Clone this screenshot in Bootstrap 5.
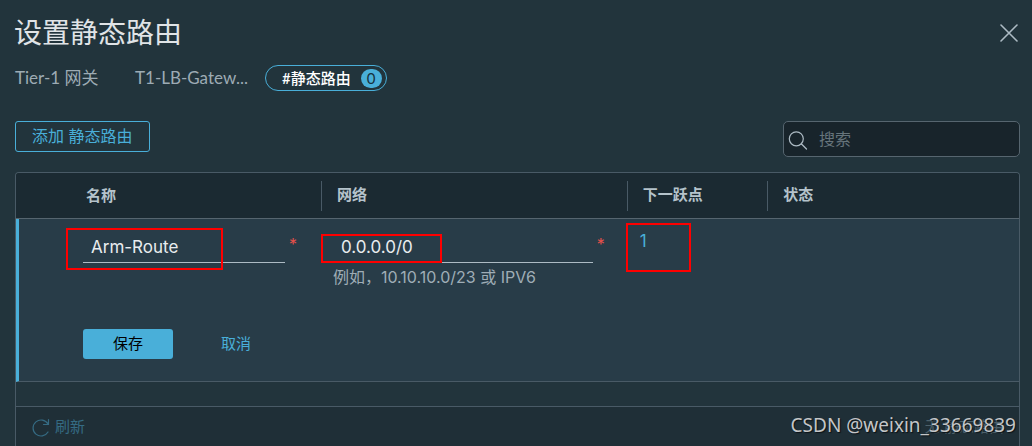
<!DOCTYPE html>
<html lang="zh-CN">
<head>
<meta charset="utf-8">
<meta name="viewport" content="width=device-width, initial-scale=1">
<title>设置静态路由</title>
<link href="https://cdn.jsdelivr.net/npm/bootstrap@5.3.0/dist/css/bootstrap.min.css" rel="stylesheet">
<style>
  :root { --accent: #49afd9; --line: #495a66; --muted-text: #adbbc4; }
  body { background: #22343c; color: var(--muted-text); font-family: Inter, "Noto Sans CJK SC", sans-serif; font-size: 15px; line-height: 20px; }
  .dialog-page { padding: 16px 12px 0 15px; }
  .dialog-title { font-size: 28px; line-height: 34px; font-weight: 400; color: #e0e4e7; margin-left: -1px; }
  .close-btn { width: 24px; height: 24px; color: var(--muted-text); line-height: 0; }
  .crumbs { height: 26px; margin-top: 15px; color: #9dabb4; font-family: Lato, "Noto Sans CJK SC", sans-serif; font-size: 17px; }
  .crumb-type { width: 120px; }
  .crumb-name { width: 118px; margin-right: 12px; }
  .filter-pill { height: 26px; padding: 0 4px 0 16px; border: 1px solid var(--accent); border-radius: 13px; color: #fff; font-size: 15px; font-weight: 500; }
  .count-dot { width: 21px; height: 19px; margin-left: 10px; border-radius: 10px; background: var(--accent); color: #16313d; font-size: 15px; font-weight: 400; }
  .tools { margin-top: 30px; height: 36px; }
  .add-btn { height: 31px; padding: 0 16px 2px; border-color: var(--accent); border-radius: 3px; color: var(--accent); font-size: 16px; line-height: 20px; }
  .search-box { width: 237px; height: 36px; }
  .search-box input { height: 36px; padding: 0 8px 0 35px; background: #18242b; border: 1px solid #56656f; border-radius: 5px; color: #fff; font-size: 16px; }
  .search-box input::placeholder { color: #66747b; opacity: 1; }
  .search-box svg { left: 5px; top: 9px; }
  .grid-frame { margin-top: 15px; border: 1px solid var(--line); border-bottom: 0; border-radius: 4px 4px 0 0; }
  .route-table { table-layout: fixed; border-collapse: separate; border-spacing: 0; }
  .route-table th { height: 46px; padding: 0; background: #1b2a32; border-bottom: 1px solid #56656f; font-weight: 700; color: #b5c3cb; vertical-align: middle; }
  .route-table th:first-child { border-top-left-radius: 3px; padding-left: 70px; }
  .route-table th:last-child { border-top-right-radius: 3px; }
  .head-split { height: 30px; padding: 4px 0 0 15px; border-left: 1px solid var(--line); }
  .route-table td { padding: 0; background: #283c48; vertical-align: top; }
  .route-table td:first-child { border-left: 3px solid var(--accent); }
  .col-name { width: 30.4%; } .col-net { width: 30.5%; } .col-hop { width: 14%; }
  .edit-row td { height: 98px; }
  .action-row td { height: 65px; padding: 12px 0 0 64px; border-bottom: 1px solid var(--line); }
  .name-cell { padding: 15px 24px 0 64px; }
  .net-cell { padding: 15px 22px 0 12px; }
  .line-input { height: 29px; padding: 0 8px 3px; background: transparent; border: 0; border-bottom: 1px solid #adbbc4; border-radius: 0; color: #e9ecef; font-size: 17px; line-height: 25px; flex: 1; min-width: 0; }
  .line-input:focus { background: transparent; color: #fff; box-shadow: none; }
  .required-star { width: 8px; margin-left: 4px; color: #e6504a; font-size: 16px; line-height: 20px; }
  .hint { margin-top: 4px; color: #9fadb6; font-size: 16px; line-height: 20px; }
  .hop-link { display: inline-block; margin: 12px 0 0 13px; color: var(--accent); font-size: 17px; line-height: 20px; text-decoration: none; }
  .callout-box { border: 2px solid #f00; pointer-events: none; }
  .callout-name { left: 47px; top: 9px; width: 157px; height: 42px; }
  .callout-net { left: 0; top: 15px; width: 121px; height: 29px; }
  .callout-hop { left: -1px; top: 4px; width: 65px; height: 49px; }
  .save-btn, .save-btn:hover { width: 90px; height: 30px; padding: 0; background: var(--accent); border: 0; border-radius: 3px; color: #000; font-size: 15px; }
  .cancel-btn { height: 30px; margin-left: 48px; padding: 0; border: 0; color: var(--accent); font-size: 15px; text-decoration: none; }
  .grid-foot { height: 40px; margin-top: 24px; padding: 0 15px; background: #1f2f37; border-top: 1px solid var(--line); }
  .refresh-btn { padding: 0; border: 0; color: #356b83; font-size: 15px; line-height: 20px; }
  .foot-count { color: #4d616b; }
  .watermark { right: 16px; bottom: 8px; font-family: "Noto Sans", sans-serif; font-size: 19px; line-height: 26px; color: #c4c6c8; text-shadow: 1px 1px 1px #0b1216; }
</style>
</head>
<body>
<main class="dialog-page position-relative">
  <header class="d-flex justify-content-between">
    <h1 class="dialog-title my-0">设置静态路由</h1>
    <button type="button" class="close-btn btn p-0 border-0 mt-1" aria-label="关闭">
      <svg width="24" height="24" viewBox="0 0 24 24" stroke="currentColor" stroke-width="1.6" stroke-linecap="round"><path d="M5 5l16 16M21 5L5 21"/></svg>
    </button>
  </header>
  <div class="crumbs d-flex align-items-center">
    <span class="crumb-type">Tier-1 网关</span>
    <span class="crumb-name text-nowrap">T1-LB-Gatew...</span>
    <span class="filter-pill d-inline-flex align-items-center">#静态路由<span class="count-dot d-inline-flex align-items-center justify-content-center">0</span></span>
  </div>
  <div class="tools d-flex align-items-start justify-content-between">
    <button type="button" class="add-btn btn mt-0">添加 静态路由</button>
    <div class="search-box position-relative">
      <input type="search" class="form-control" placeholder="搜索" aria-label="搜索">
      <svg class="position-absolute" width="20" height="20" viewBox="0 0 20 20" fill="none" stroke="#adbbc4" stroke-width="1.2" stroke-linecap="round"><circle cx="8.3" cy="8.8" r="7"/><path d="M13.5 14l5 5"/></svg>
    </div>
  </div>
  <section class="grid-frame">
    <table class="route-table w-100">
      <colgroup><col class="col-name"><col class="col-net"><col class="col-hop"><col></colgroup>
      <thead>
        <tr>
          <th scope="col">名称</th>
          <th scope="col"><div class="head-split">网络</div></th>
          <th scope="col"><div class="head-split">下一跃点</div></th>
          <th scope="col"><div class="head-split">状态</div></th>
        </tr>
      </thead>
      <tbody>
        <tr class="edit-row">
          <td class="position-relative">
            <div class="name-cell d-flex">
              <input type="text" class="line-input form-control" value="Arm-Route" aria-label="名称" required>
              <span class="required-star">*</span>
            </div>
            <span class="callout-box callout-name position-absolute"></span>
          </td>
          <td class="position-relative">
            <div class="net-cell">
              <div class="d-flex">
                <input type="text" class="line-input form-control" value="0.0.0.0/0" aria-label="网络" aria-describedby="net-hint" required>
                <span class="required-star">*</span>
              </div>
              <div class="hint" id="net-hint">例如，10.10.10.0/23 或 IPV6</div>
            </div>
            <span class="callout-box callout-net position-absolute"></span>
          </td>
          <td class="position-relative">
            <a href="#" class="hop-link">1</a>
            <span class="callout-box callout-hop position-absolute"></span>
          </td>
          <td></td>
        </tr>
        <tr class="action-row">
          <td colspan="4">
            <button type="button" class="save-btn btn">保存</button><button type="button" class="cancel-btn btn">取消</button>
          </td>
        </tr>
      </tbody>
    </table>
    <footer class="grid-foot d-flex align-items-center justify-content-between">
      <button type="button" class="refresh-btn btn d-inline-flex align-items-center gap-1">
        <svg width="20" height="20" viewBox="0 0 20 20" fill="none" stroke="currentColor" stroke-width="1.2" stroke-linecap="round" stroke-linejoin="round"><path d="M17 7A8 8 0 1 0 17 15M17.500 2.500v5h-5"/></svg>刷新
      </button>
      <span class="foot-count">无 静态路由</span>
    </footer>
  </section>
  <div class="watermark position-absolute">CSDN @weixin_33669839</div>
</main>
<script src="https://cdn.jsdelivr.net/npm/bootstrap@5.3.0/dist/js/bootstrap.bundle.min.js"></script>
</body>
</html>
